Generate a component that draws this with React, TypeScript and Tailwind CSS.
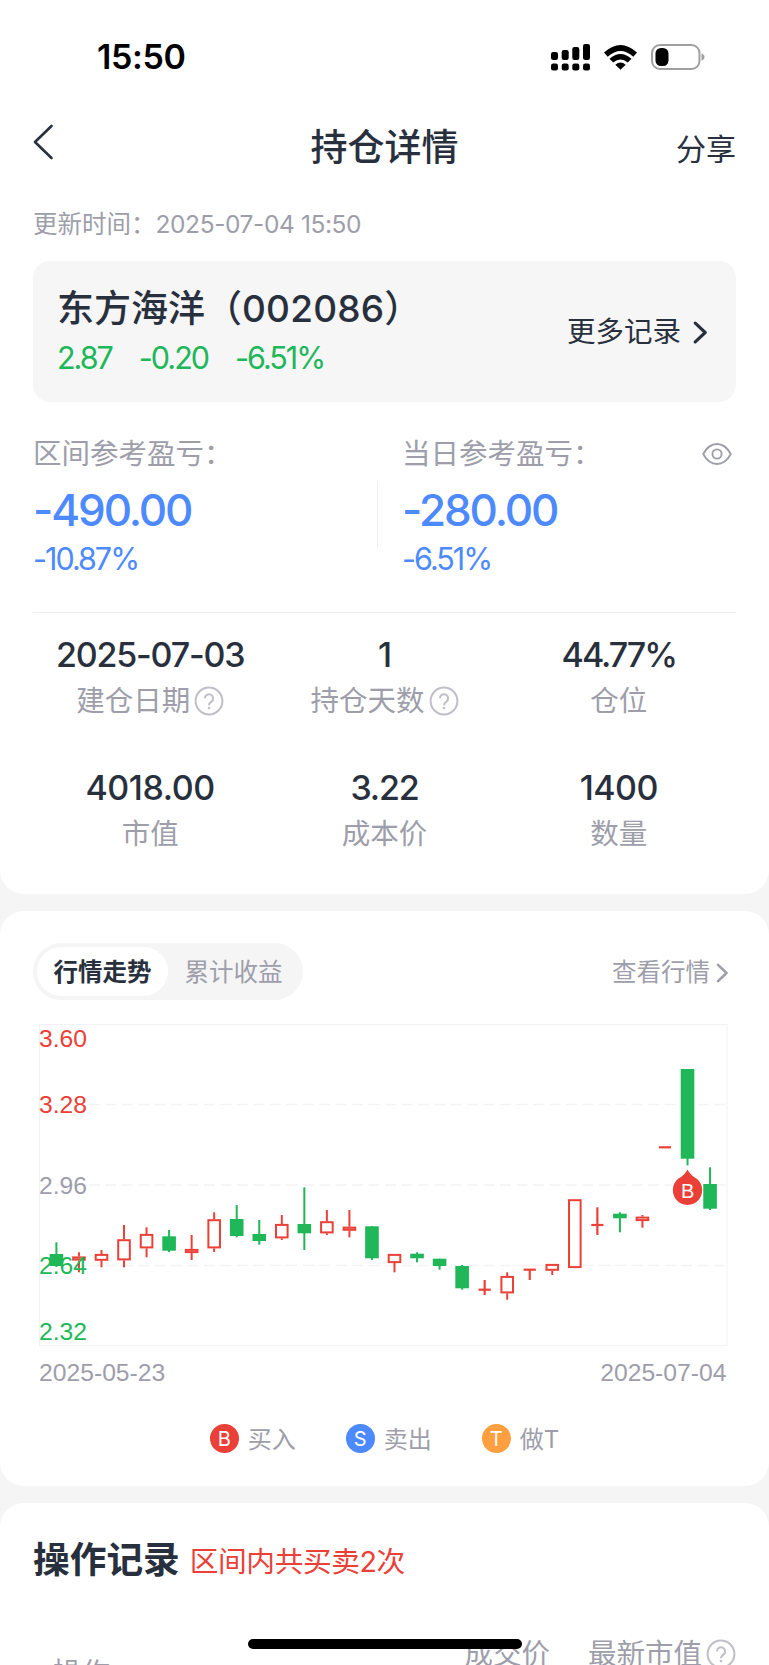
import type { ReactNode } from 'react';
import clsx from 'clsx';

const RED = '#eb4037';
const GREEN = '#20b759';

interface Candle {
  up: boolean;
  top: number;
  bottom: number;
  high: number;
  low: number;
}

// [涨跌, 实体上沿, 实体下沿, 最高, 最低]
const rawCandles: [number, number, number, number, number][] = [
  [0, 1254, 1266, 1242.3, 1267],
  [1, 1256.5, 1260.5, 1252.3, 1272.3],
  [1, 1254, 1260.7, 1250, 1267.3],
  [1, 1239.3, 1260.3, 1225, 1267.3],
  [1, 1234, 1248.3, 1227.3, 1257.3],
  [0, 1236.3, 1250.7, 1230, 1252],
  [1, 1249, 1253, 1235, 1260],
  [1, 1219.3, 1248.3, 1212.3, 1252],
  [0, 1219, 1236, 1205, 1237.3],
  [0, 1234, 1241, 1220, 1244.7],
  [1, 1224, 1238.3, 1215, 1240],
  [0, 1224, 1233.3, 1187.3, 1250],
  [1, 1221.3, 1233.3, 1210, 1235],
  [1, 1226.7, 1230.7, 1210, 1237.3],
  [0, 1226.3, 1258.3, 1226.3, 1260],
  [1, 1254, 1263, 1254, 1272.3],
  [0, 1253.7, 1258.3, 1252.3, 1262.3],
  [0, 1258.7, 1266, 1258.7, 1269.7],
  [0, 1266, 1288.3, 1265, 1289.7],
  [1, 1289.7, 1289.7, 1280, 1295],
  [1, 1276, 1293.3, 1272.3, 1299.7],
  [1, 1269.7, 1269.7, 1269.7, 1280],
  [1, 1264, 1270.7, 1264, 1275],
  [1, 1199.3, 1268, 1199.3, 1268],
  [1, 1225, 1225, 1207.3, 1235],
  [0, 1213.7, 1218.3, 1212.3, 1232.3],
  [1, 1216.7, 1221, 1215, 1227.7],
  [1, 1147.3, 1147.3, 1147.3, 1147.3],
  [0, 1069, 1158.7, 1069, 1165.3],
  [0, 1184, 1208.7, 1167.3, 1210],
];

const candles: Candle[] = rawCandles.map(([up, top, bottom, high, low]) => ({
  up: up === 1,
  top,
  bottom,
  high,
  low,
}));

const priceLabels = [
  { text: '3.60', y: 1047.4, color: RED },
  { text: '3.28', y: 1113.2, color: RED },
  { text: '2.96', y: 1194, color: '#9e9eab' },
  { text: '2.64', y: 1274, color: GREEN },
  { text: '2.32', y: 1340.2, color: GREEN },
];

function CandleShape({ candle, x }: { candle: Candle; x: number }) {
  const { up, top, bottom, high, low } = candle;
  if (!up) {
    return (
      <g fill={GREEN}>
        <rect x={x - 1} y={high} width={2} height={low - high} />
        <rect x={x - 6.8} y={top} width={13.6} height={bottom - top} />
      </g>
    );
  }
  if (top === bottom) {
    return (
      <g stroke={RED} strokeWidth={2.2}>
        <line x1={x - 6.1} x2={x + 6.1} y1={top} y2={top} />
        <line x1={x} x2={x} y1={high} y2={low} />
      </g>
    );
  }
  return (
    <g stroke={RED} strokeWidth={2} fill="none">
      <line x1={x} x2={x} y1={high} y2={top} />
      <line x1={x} x2={x} y1={bottom} y2={low} />
      <rect
        x={x - 5.8}
        y={top + 0.9}
        width={11.6}
        height={Math.max(bottom - top - 1.8, 1.8)}
      />
    </g>
  );
}

function KLineChart() {
  return (
    <svg
      className="block h-[374px] w-[703px]"
      viewBox="33 1018 703 374"
      fontFamily="'Liberation Sans', Arial, sans-serif"
      fontSize="24.7"
    >
      <rect x="39.5" y="1024.5" width="687.5" height="321" fill="none" stroke="#f2f2f2" />
      {[1104.5, 1185, 1265.5].map((y) => (
        <line key={y} x1="39.5" x2="727" y1={y} y2={y} stroke="#f4f4f4" strokeWidth="1.3" strokeDasharray="11 5.45" />
      ))}
      {candles.map((candle, i) => (
        <CandleShape key={i} candle={candle} x={56.4 + i * 22.54} />
      ))}
      {priceLabels.map((label) => (
        <text key={label.text} x="39" y={label.y} fill={label.color}>
          {label.text}
        </text>
      ))}
      <path
        d="M687.5 1169.5C689 1173 691.5 1175 694 1177A14.7 14.7 0 1 1 681 1177C683.5 1175 686 1173 687.5 1169.5Z"
        fill={RED}
      />
      <text x="687.6" y="1198.2" fill="#fff" fontSize="20" textAnchor="middle">
        B
      </text>
      <text x="39" y="1381" fill="#9e9eab">2025-05-23</text>
      <text x="726.5" y="1381" fill="#9e9eab" textAnchor="end">2025-07-04</text>
    </svg>
  );
}

function HelpIcon() {
  return (
    <svg className="size-[30px] shrink-0" viewBox="0 0 30 30" fill="none" stroke="#bfbfc8" strokeWidth="2">
      <circle cx="15" cy="15" r="13.4" />
      <path d="M10.9 12.3a4.1 4.1 0 1 1 6.5 3.3c-1.6 1.1-2.4 1.800-2.400 3.700" />
      <circle cx="15" cy="22" r="1.3" fill="#bfbfc8" stroke="none" />
    </svg>
  );
}

function Chevron({ className }: { className: string }) {
  return (
    <svg className={className} viewBox="0 0 14 22" fill="none" stroke="currentColor" strokeLinecap="round" strokeLinejoin="round">
      <path d="M2 2l9.5 9L2 20" />
    </svg>
  );
}

function StatusBar() {
  return (
    <div className="flex h-[114px] items-center justify-between pr-[31px] pl-[64px] text-black">
      <span className="text-[34px] leading-none font-semibold tracking-[-0.4px]">15:50</span>
      <svg className="h-[30px] w-[156px]" viewBox="549 42 156 30">
        {[551, 561.7, 572.3, 583].map((x, i) => (
          <g key={x}>
            <rect x={x} y={[52, 50, 47, 44][i]} width="7" height={[8, 10, 13, 16][i]} rx="2.2" />
            <rect x={x} y="63.5" width="7" height="7" rx="2.2" />
          </g>
        ))}
        <path d="M604 52.6Q620.5 37.5 637 52.6L633.3 56.7Q620.5 45.3 607.7 56.7Z" />
        <path d="M609.5 58.7Q620.5 49.3 631.5 58.7L627.8 62.5Q620.5 56.6 613.2 62.5Z" />
        <path d="M615.3 64.7Q620.5 60.5 625.7 64.7L620.5 69.7Z" />
        <rect x="652" y="45" width="47.5" height="24" rx="8" fill="none" stroke="#a0a0a0" strokeWidth="2" />
        <path d="M701.5 53.5Q704.5 54.5 704.5 57Q704.5 59.5 701.5 60.5Z" fill="#a0a0a0" />
        <rect x="655.5" y="48" width="13" height="18" rx="5.5" />
      </svg>
    </div>
  );
}

function Stat({ value, label, help, tracking = 'tracking-[-1.2px]' }: { value: string; label: string; help?: boolean; tracking?: string }) {
  return (
    <div className="flex flex-col items-center">
      <div className={clsx('h-9 text-[34px] leading-9 font-medium', tracking)}>{value}</div>
      <div className="mt-[13px] flex h-[30px] items-center gap-[4px] text-[28.5px] leading-[30px] text-[#9e9eab]">
        {label}
        {help && <HelpIcon />}
      </div>
    </div>
  );
}

function Profit({ label, value, percent, children }: { label: string; value: string; percent: string; children?: ReactNode }) {
  return (
    <>
      <div className="flex h-[36px] items-center justify-between pr-1 text-[28.5px] text-[#9e9eab]">
        {label}
        {children}
      </div>
      <div className="mt-[17px] h-[43px] text-[44px] leading-[43px] font-medium tracking-[-2.1px] text-[#4d8aff]">{value}</div>
      <div className="mt-3 h-[30px] text-[30.5px] leading-[30px] tracking-[-2px] text-[#4d8aff]">{percent}</div>
    </>
  );
}

function Legend({ mark, label, color }: { mark: string; label: string; color: string }) {
  return (
    <div className="flex items-center gap-[9px]">
      <span className={clsx('flex size-[29px] items-center justify-center rounded-full text-[20px] leading-none text-white', color)}>
        {mark}
      </span>
      <span className="mt-[3px] text-[24px] leading-none text-[#9e9eab]">{label}</span>
    </div>
  );
}

export default function App() {
  return (
    <div className="relative flex h-[1665px] w-[769px] flex-col gap-[17px] overflow-hidden bg-[#f5f5f5] font-['Inter','Noto_Sans_CJK_SC',sans-serif] text-[#29303d]">
      <section className="h-[894px] shrink-0 rounded-b-[24px] bg-white px-[33px]">
        <StatusBar />
        <header className="grid h-[66px] grid-cols-3 items-center">
          <svg className="mb-[11px] h-[36px] w-[21px]" viewBox="0 0 21 36" fill="none" stroke="currentColor" strokeWidth="2.6" strokeLinecap="round" strokeLinejoin="round">
            <path d="M18.5 2L2 18l16.500 16" />
          </svg>
          <h1 className="text-center text-[37px] leading-none font-medium">持仓详情</h1>
          <span className="mt-1 text-right text-[30px] leading-none">分享</span>
        </header>
        <div className="mt-[31px] h-[27px] text-[24.5px] leading-[27px] text-[#9e9eab]">
          更新时间：<span className="tracking-[-0.4px]">2025-07-04 15:50</span>
        </div>

        <div className="mt-[23px] flex h-[141px] items-center justify-between rounded-[17px] bg-[#f6f6f6] pr-[28px] pl-6">
          <div className="mt-[2px]">
            <div className="text-[37px] leading-[46px] font-medium">
              东方海洋（<span className="tracking-[0.2px]">002086</span>）
            </div>
            <div className="mt-1 flex gap-[27px] text-[30.5px] leading-[44px] tracking-[-2px] text-[#20b759]">
              <span>2.87</span>
              <span>-0.20</span>
              <span>-6.51%</span>
            </div>
          </div>
          <div className="mt-[2px] flex items-center gap-[12px] text-[28.5px]">
            更多记录
            <Chevron className="h-[23px] w-[15px] stroke-[3]" />
          </div>
        </div>

        <div className="mt-[34px] flex h-[177px] border-b border-[#eeeeee]">
          <div className="w-[344px]">
            <Profit label="区间参考盈亏：" value="-490.00" percent="-10.87%" />
          </div>
          <div className="mt-[46px] mr-[24px] h-[65px] w-px bg-[#eeeeee]" />
          <div className="flex-1">
            <Profit label="当日参考盈亏：" value="-280.00" percent="-6.51%">
              <svg className="h-[24px] w-[30px]" viewBox="0 0 30 24" fill="none" stroke="currentColor" strokeWidth="1.9">
                <path d="M1.2 12C5 5 10 2 15 2s10 3 13.8 10C25 19 20 22 15 22S5 19 1.2 12Z" />
                <circle cx="15" cy="12" r="4.6" />
              </svg>
            </Profit>
          </div>
        </div>

        <div className="mt-6 grid grid-cols-3 gap-y-[54px]">
          <Stat value="2025-07-03" label="建仓日期" help />
          <Stat value="1" label="持仓天数" help />
          <Stat value="44.77%" label="仓位" tracking="tracking-[-2px]" />
          <Stat value="4018.00" label="市值" tracking="tracking-[-0.4px]" />
          <Stat value="3.22" label="成本价" />
          <Stat value="1400" label="数量" tracking="tracking-[-0.6px]" />
        </div>
      </section>

      <section className="h-[575px] shrink-0 rounded-[24px] bg-white px-[33px] pt-8">
        <div className="flex items-center justify-between text-[24.5px]">
          <div className="flex h-[57px] items-center rounded-full bg-[#f5f5f5] p-1">
            <span className="flex h-full w-[131px] items-center justify-center rounded-full bg-white pt-px font-bold">行情走势</span>
            <span className="w-[131px] pt-px text-center text-[#9e9eab]">累计收益</span>
          </div>
          <div className="mt-[2px] mr-[7px] flex items-center gap-[6px] text-[#9e9eab]">
            查看行情
            <Chevron className="h-[20px] w-[13px] stroke-[2.8]" />
          </div>
        </div>
        <div className="mt-[18px]">
          <KLineChart />
        </div>
        <div className="mt-[32px] flex h-[29px] items-center justify-center gap-[50px]">
          <Legend mark="B" label="买入" color="bg-[#eb4037]" />
          <Legend mark="S" label="卖出" color="bg-[#4d8aff]" />
          <Legend mark="T" label="做T" color="bg-[#ff9f40]" />
        </div>
      </section>

      <section className="h-[200px] shrink-0 rounded-t-[24px] bg-white px-[33px] pt-[33px]">
        <div className="flex h-[48px] items-center gap-[10px]">
          <h2 className="text-[36.7px] leading-none font-bold">操作记录</h2>
          <span className="mt-[5px] text-[28.7px] leading-none tracking-[-0.4px] text-[#eb4037]">区间内共买卖2次</span>
        </div>
        <div className="mt-[54px] flex h-[32px] items-start text-[28.5px] leading-[32px] text-[#9e9eab]">
          <span className="mt-[19px] ml-5">操作</span>
          <span className="ml-auto">成交价</span>
          <span className="ml-[38px] flex items-center gap-[4px]">
            最新市值
            <HelpIcon />
          </span>
        </div>
      </section>

      <div className="absolute top-[1639px] left-[248px] h-[10px] w-[274px] rounded-full bg-black" />
    </div>
  );
}
